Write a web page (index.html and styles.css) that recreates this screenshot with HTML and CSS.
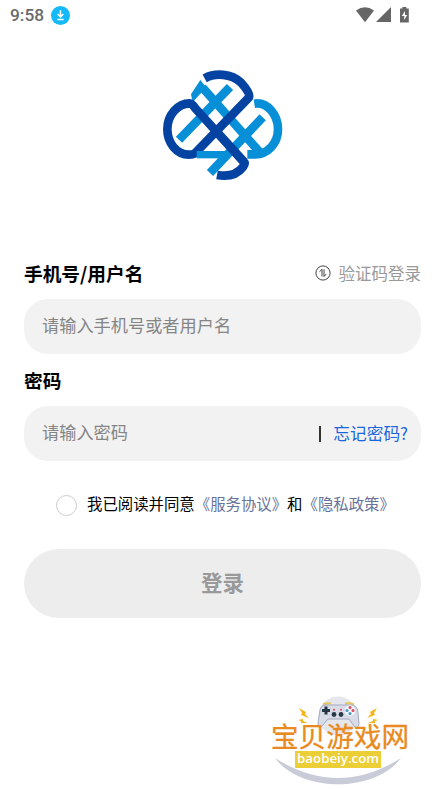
FILE: index.html
```html
<!DOCTYPE html>
<html lang="zh-CN">
<head>
    <meta charset="UTF-8">
    <meta name="viewport" content="width=device-width, initial-scale=1.0">
    <title>登录</title>
    <link rel="stylesheet" href="styles.css">
</head>
<body>
    <header class="status-bar">
        <span class="time">9:58</span>
        <svg class="download" viewBox="0 0 18 18">
            <circle cx="9" cy="9" r="9" fill="#14b9fa"/>
            <path d="M9 4v6M6.3 7.6L9 10.3l2.7-2.7M6 12.8h6" fill="none" stroke="#fff" stroke-width="1.4"/>
        </svg>
        <svg class="signals" viewBox="0 0 54 17">
            <path d="M0 3.5Q9-3 18 3.5L9 15.2Z"/>
            <path d="M35 0v15H20Z"/>
            <path d="M44 1.6h2.4V0h4v1.6h2.4V15.5H44Z"/>
            <path d="M49 4l-3.2 5h2.4v4l3-5h-2.2Z" fill="#fff"/>
        </svg>
    </header>

    <main class="login">
        <svg class="logo" viewBox="0 0 405 375">
            <g fill="none" stroke-width="26" stroke-linejoin="round">
                <g stroke="#078fd8">
                    <path d="M72 233L225 75"/>
                    <path d="M165 333L323 166"/>
                    <path d="M142 76L312 268"/>
                    <path d="M298 125C336 119 369 157 369 202C369 245 337 277 300 277Q289 277 277 277"/>
                </g>
                <path d="M136 54L108 97L113 121L133 98L155 78Z" fill="#078fd8"/>
                <path d="M149 49C180 32 229 34 258 62C278 84 287 100 281 107L120 274Q114 278 102 278C64 278 37 242 37 202C37 158 69 124 104 124Q111 124 121 139L266 299Q272 304 264 315C246 338 218 345 186 339" stroke="#0543a3"/>
                <path d="M125 278H215" stroke="#078fd8" stroke-width="22"/>
                <path d="M190 215L267 300" stroke="#0543a3"/>
            </g>
        </svg>

        <div class="label-row">
            <label for="user">手机号/用户名</label>
            <a class="code-login">
                <svg viewBox="0 0 16 16">
                    <circle cx="8" cy="8" r="7.1"/>
                    <path d="M4.5 6.7L7 4.3v7.2M9 4.3v7.2l2.3-2.5"/>
                </svg>
                验证码登录
            </a>
        </div>
        <div class="field">
            <input type="text" id="user" placeholder="请输入手机号或者用户名">
        </div>

        <div class="label-row password-row">
            <label for="password">密码</label>
        </div>
        <div class="field">
            <input type="password" id="password" placeholder="请输入密码">
            <span class="divider"></span>
            <a class="forgot">忘记密码?</a>
        </div>

        <div class="agreement">
            <span class="radio"></span>
            <p>我已阅读并同意<a>《服务协议》</a>和<a>《隐私政策》</a></p>
        </div>

        <button class="submit">登录</button>
    </main>

    <div class="watermark">
        <svg viewBox="0 0 156 99">
            <circle cx="76" cy="26" r="19.5" fill="#e6e7ed"/>
            <path d="M13 68Q76 108 139 68C113 103 39 103 13 68Z" fill="#c9ccd8"/>
            <path d="M61 14.5q4-2 8-1M83 13.5q5-1 9 1" fill="none" stroke="#e9c65a" stroke-width="2"/>
            <path d="M64 15H89Q95 15 96 22L97 34Q96 40 92 36L87 29H66L60 36Q56 40 56 33L58 20Q59 15 64 15Z" fill="#d9dce6" stroke="#a3abc0" stroke-width="1"/>
            <path d="M64 16.5v8M60 20.5h8" stroke="#243644" stroke-width="3"/>
            <g fill="#273949">
                <circle cx="72" cy="24.5" r="2.4"/>
                <circle cx="79" cy="24.5" r="2.4"/>
            </g>
            <circle cx="88" cy="20.5" r="5.3" fill="#f4f6fa"/>
            <g fill="#dc4860">
                <circle cx="88" cy="17.4" r="1.5"/>
                <circle cx="91" cy="20.5" r="1.5"/>
                <circle cx="72" cy="19.8" r="1"/>
                <circle cx="79" cy="19.8" r="1"/>
            </g>
            <circle cx="85" cy="20.5" r="1.5" fill="#4298bf"/>
            <circle cx="88" cy="23.6" r="1.5" fill="#4298bf"/>
            <g fill="#f6b31b">
                <path d="M37 18l7 4-1 2 4 4-8-3 1-2Z"/>
                <path d="M36 30l5-1 0 2 5 2-7 0 0-2Z"/>
                <path d="M115 18l-7 4 1 2-4 4 8-3-1-2Z"/>
                <path d="M116 30l-5-1 0 2-5 2 7 0 0-2Z"/>
            </g>
        </svg>
        <div class="watermark-text">
            <span class="site-name">宝贝游戏网</span>
            <span class="site-url">baobeiy.com</span>
        </div>
    </div>
</body>
</html>
```
FILE: styles.css
```css
* {
    box-sizing: border-box;
}
body {
    margin: 0;
    height: 789px;
    position: relative;
    overflow: hidden;
    background-color: #fff;
    color: #000;
    font-family: "Noto Sans CJK SC", sans-serif;
}
.status-bar {
    display: flex;
    align-items: center;
    height: 30px;
    padding: 0 34px 0 10px;
}
.time {
    font-family: Roboto, sans-serif;
    font-size: 17.3px;
    font-weight: 500;
    color: #6a6a6a;
}
.download {
    width: 19px;
    height: 19px;
    margin-left: 7px;
}
.signals {
    width: 54px;
    height: 17px;
    margin-left: auto;
    fill: #666;
}
.login {
    display: flex;
    flex-direction: column;
    padding: 32px 23px 0 24px;
}
.logo {
    width: 135px;
    height: 125px;
    margin-left: 131px;
    margin-bottom: 71px;
}
.label-row {
    display: flex;
    align-items: center;
    justify-content: space-between;
    height: 30px;
    margin-bottom: 11px;
}
.label-row label {
    padding-bottom: 1px;
    font-size: 18.7px;
    font-weight: 700;
}
.password-row {
    margin-top: 11px;
}
.code-login {
    display: flex;
    align-items: center;
    gap: 8px;
    font-size: 16.5px;
    color: #999;
}
.code-login svg {
    width: 16px;
    height: 16px;
    fill: none;
    stroke: #444;
}
.field {
    display: flex;
    align-items: center;
    height: 55px;
    padding: 0 13px 2px 18px;
    border-radius: 24px;
    background-color: #f2f2f2;
}
.field input {
    flex: 1;
    min-width: 0;
    padding: 0 0 2px;
    border: none;
    outline: none;
    background: none;
    font-family: inherit;
    font-size: 17.2px;
}
.field input::placeholder {
    color: #858585;
}
.divider {
    width: 2px;
    height: 16px;
    margin-top: 2px;
    margin-right: 12px;
    background-color: #333;
}
.forgot {
    font-size: 16.7px;
    color: #1a66dc;
}
.agreement {
    display: flex;
    align-items: center;
    gap: 10px;
    height: 30px;
    margin: 29px 0 29px 32px;
}
.radio {
    width: 21px;
    height: 21px;
    border: 1px solid #ccc;
    border-radius: 50%;
}
.agreement p {
    margin: 0;
    padding-bottom: 4px;
    font-size: 15.4px;
    white-space: nowrap;
}
.agreement a {
    color: #677399;
}
.submit {
    height: 69px;
    padding: 0 0 4px;
    border: none;
    border-radius: 35px;
    background-color: #ededed;
    color: #999;
    font-family: inherit;
    font-size: 21.5px;
    font-weight: 700;
}
.watermark {
    position: absolute;
    left: 262px;
    top: 690px;
    width: 156px;
    height: 99px;
}
.watermark svg {
    position: absolute;
    inset: 0;
}
.watermark-text {
    position: relative;
    display: flex;
    flex-direction: column;
    align-items: center;
    padding-top: 32px;
}
.site-name {
    height: 27px;
    font-size: 27.6px;
    line-height: 27px;
    color: #e98a20;
    -webkit-text-stroke: 0.3px #e98a20;
    white-space: nowrap;
}
.site-url {
    width: 86px;
    height: 17px;
    margin-top: 2px;
    margin-right: 4px;
    background-color: #ecce37;
    color: #fff;
    font-family: "Open Sans", sans-serif;
    font-size: 13.3px;
    font-weight: 600;
    line-height: 15px;
    text-align: center;
}
```
